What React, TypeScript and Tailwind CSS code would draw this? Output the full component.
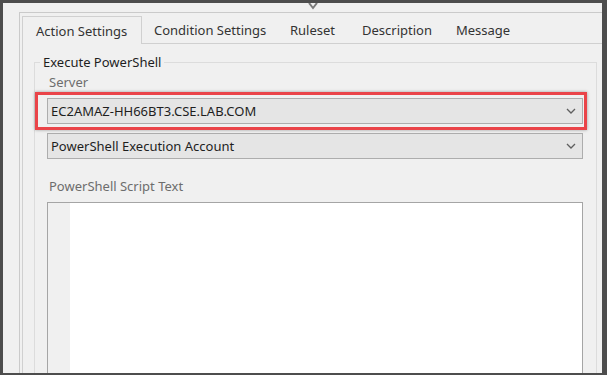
import React from "react";

const font = { fontFamily: '"Noto Sans", "Open Sans", sans-serif' };

function Chevron() {
  return (
    <svg width="10" height="6" viewBox="0 0 10 6" className="block">
      <path d="M1 1 L5 5 L9 1" fill="none" stroke="#5f5f5f" strokeWidth="1.3" />
    </svg>
  );
}

function Combo({ text }: { text: string }) {
  return (
    <div className="h-[26px] w-[536px] border border-[#adadad] bg-[#e5e5e5] flex items-center pl-[3px] pr-[6px]">
      <span className="flex-1 text-[13px] text-[#1e1e1e] leading-none pt-[1px]">{text}</span>
      <Chevron />
    </div>
  );
}

export default function App() {
  return (
    <div
      className="w-[607px] h-[375px] bg-[#4d4d4d] pl-[3px] pt-[3px] pr-[5px] pb-[2px] flex relative overflow-hidden"
      style={font}
    >
      <div className="flex-1 bg-[#f0f0f0] relative overflow-hidden pl-[16px] pt-[9px] flex flex-col">
        <div className="flex-1 border-l border-t border-[#cacaca] pl-[2px] pt-[3px] flex flex-col">
          {/* tabs */}
          <div className="flex h-[28px] text-[13px] text-[#333]">
            <div className="w-[120px] h-[28px] border-l border-t border-r border-[#d0d0d0] flex items-center pl-[13px] pt-[2px]">
              Action Settings
            </div>
            <div className="flex-1 h-[28px] border-b border-[#d0d0d0] flex items-center pt-[2px]">
              <div className="w-[136px] pl-[12px]">Condition Settings</div>
              <div className="w-[72px] pl-[12px]">Ruleset</div>
              <div className="w-[94px] pl-[12px]">Description</div>
              <div className="pl-[12px]">Message</div>
            </div>
          </div>
          {/* panel */}
          <div className="flex-1 border-l border-[#d0d0d0] pl-[11px] pt-[10px]">
            <fieldset className="w-[563px] h-[400px] border border-[#dcdcdc] pl-[12px] pr-[13px]">
              <legend className="ml-[-7px] px-[3px] text-[13px] leading-[17px] text-[#1e1e1e]">
                Execute PowerShell
              </legend>
              <div className="mt-[3px] h-[16px] leading-[16px] text-[13px] text-[#6d6d6d] pl-[2px]">
                Server
              </div>
              <div className="mt-[8px] relative">
                <Combo text="EC2AMAZ-HH66BT3.CSE.LAB.COM" />
                <div className="absolute left-[-12px] top-[-6px] w-[552px] h-[38px] border-[3px] border-[#ea4449] shadow-[0_0_3px_rgba(0,0,0,0.35)]" />
              </div>
              <div className="mt-[9px]">
                <Combo text="PowerShell Execution Account" />
              </div>
              <div className="mt-[19px] h-[16px] leading-[16px] text-[13px] text-[#6d6d6d] pl-[2px]">
                PowerShell Script Text
              </div>
              <div className="mt-[8px] w-[536px] h-[200px] border border-[#a5a5a5] flex">
                <div className="w-[22px] bg-[#f0f0f0]" />
                <div className="flex-1 bg-white" />
              </div>
            </fieldset>
          </div>
        </div>
        <div className="absolute left-[305px] top-0">
          <svg width="10" height="7" viewBox="0 0 10 7" className="block">
            <path d="M1 0 L5 5 L9 0" fill="none" stroke="#7a7a7a" strokeWidth="2" />
          </svg>
        </div>
      </div>
    </div>
  );
}
